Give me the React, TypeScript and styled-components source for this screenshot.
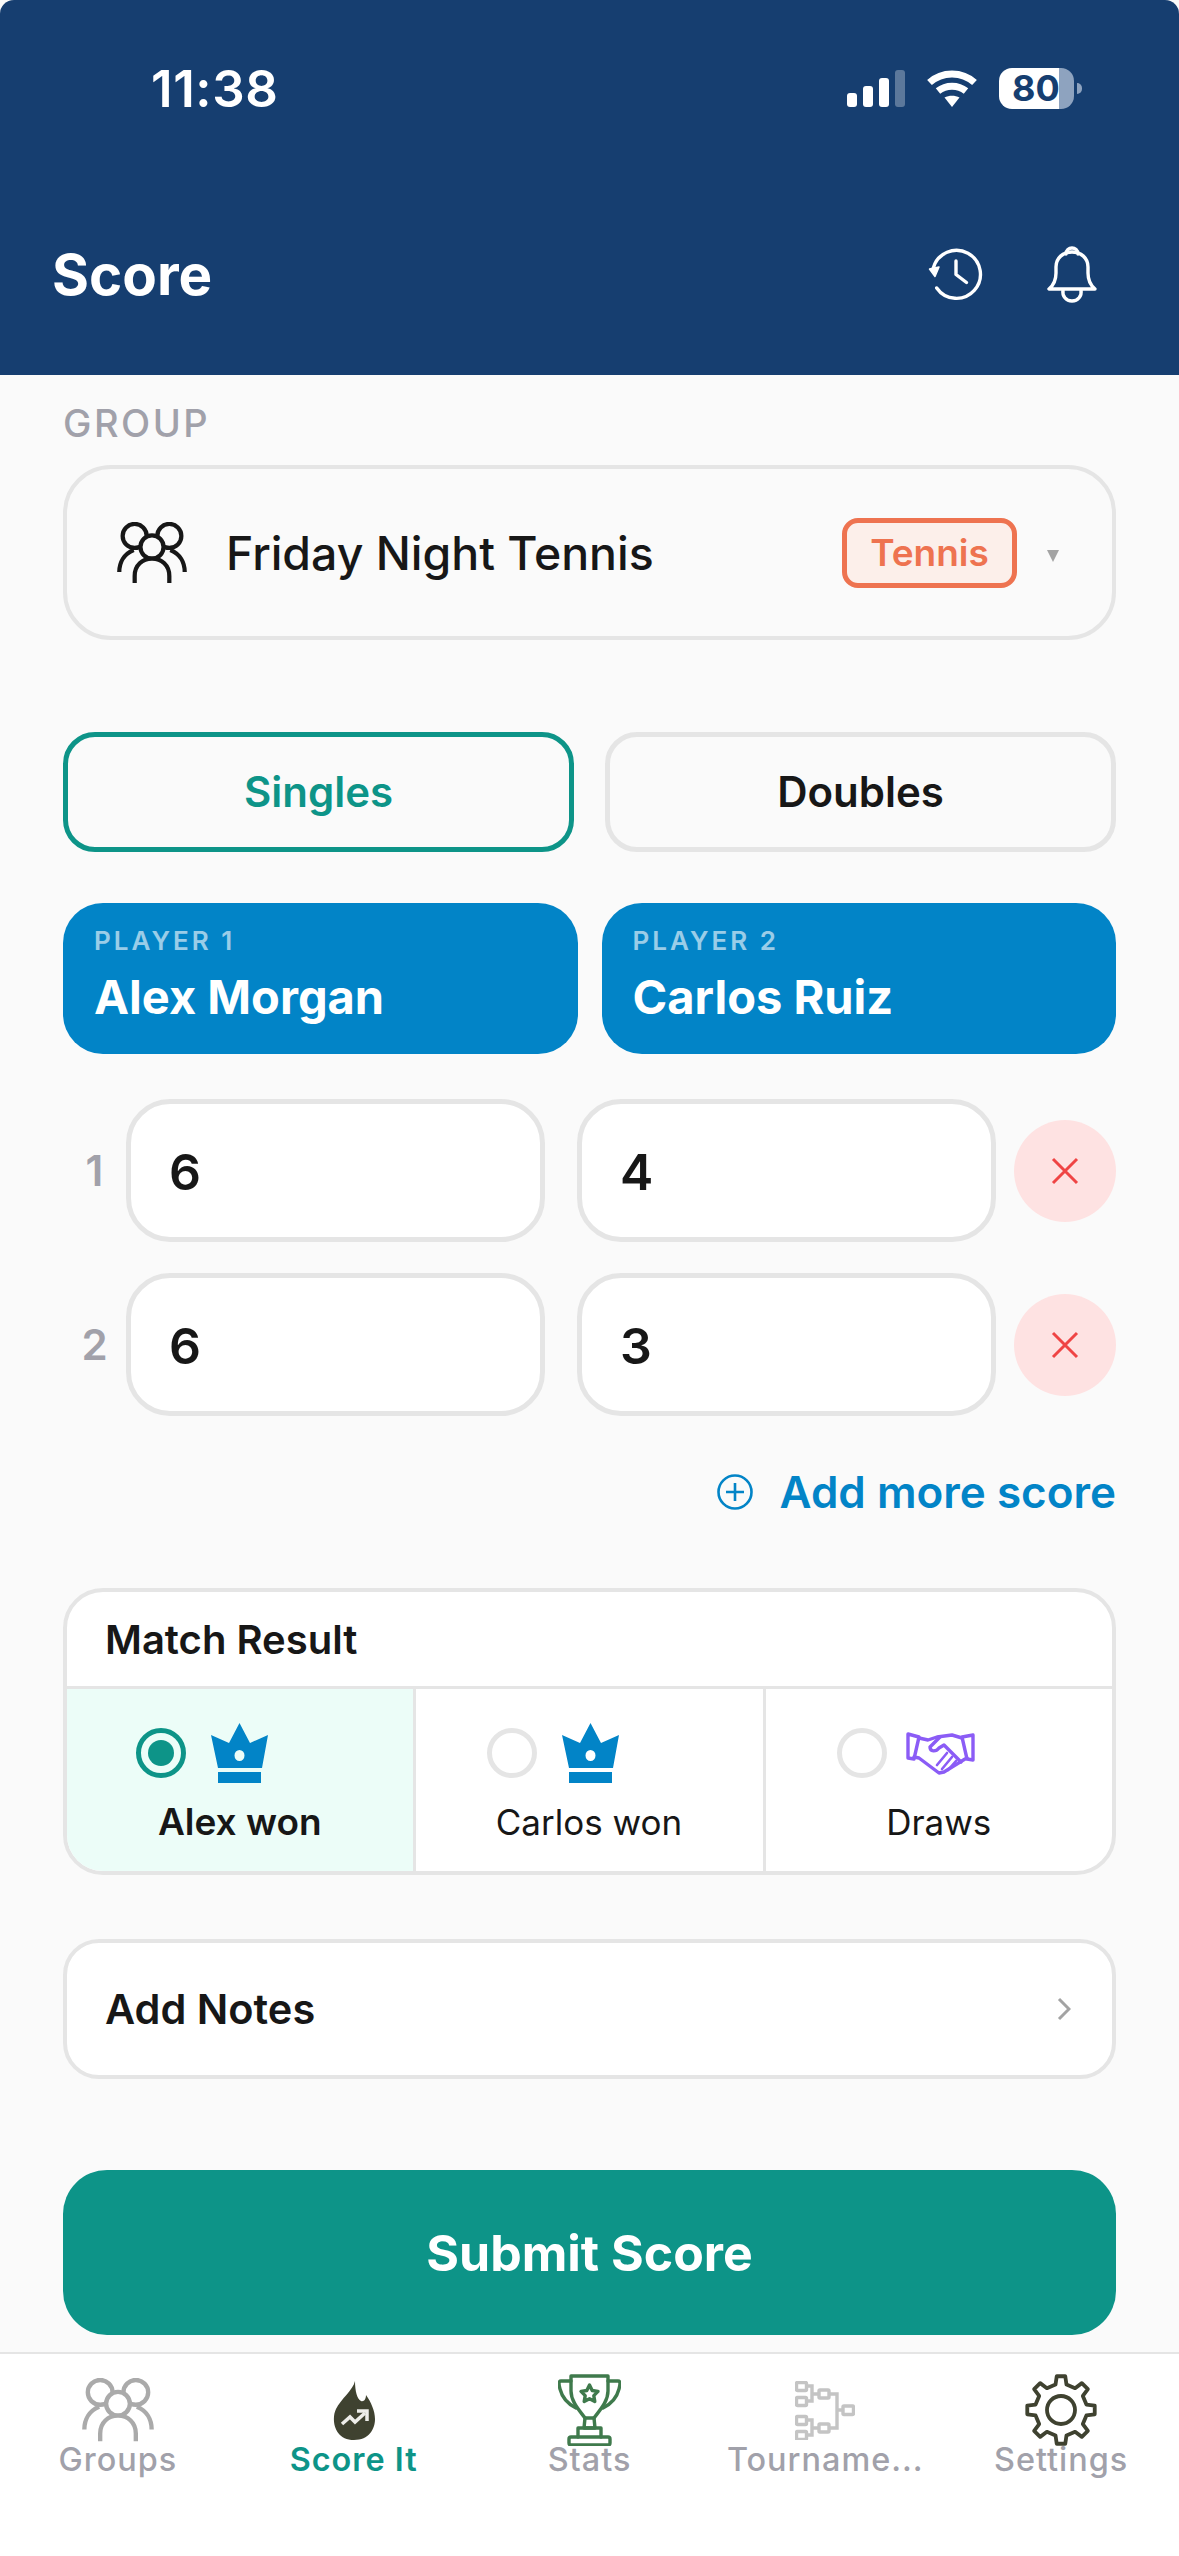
import React from 'react';
import styled, { createGlobalStyle } from 'styled-components';

const GlobalStyle = createGlobalStyle`
    html, body {
        margin: 0;
        padding: 0;
        background: #ffffff;
    }
    body {
        font-family: Inter, "Noto Sans", sans-serif;
        color: #171717;
    }
    * {
        box-sizing: border-box;
    }
`;

const Page = styled.div`
    width: 1179px;
    height: 2556px;
    display: flex;
    flex-direction: column;
    background: #fafafa;
    overflow: hidden;
`;

const Header = styled.header`
    height: 375px;
    flex: none;
    background: #163e70;
    border-radius: 14px 14px 0 0;
    color: #fff;
    padding: 64px 53px 0 52px;
`;

const StatusBar = styled.div`
    height: 48px;
    display: flex;
    align-items: center;
    justify-content: space-between;
    padding: 0 44px 0 99px;
`;

const Time = styled.span`
    font-size: 51px;
    font-weight: 600;
    letter-spacing: 0.6px;
`;

const StatusIcons = styled.div`
    display: flex;
    align-items: center;
    gap: 22px;
`;

const Battery = styled.div`
    width: 75px;
    height: 41px;
    border-radius: 13px;
    background: linear-gradient(90deg, #fff 0 60px, #8ea3bf 60px);
    color: #163e70;
    font-size: 36px;
    font-weight: 700;
    line-height: 41px;
    padding-left: 13px;
`;

const BatteryCap = styled.div`
    width: 5px;
    height: 11px;
    margin-left: -19px;
    background: #8ea3bf;
    border-radius: 0 6px 6px 0;
`;

const TitleRow = styled.div`
    margin-top: 132px;
    height: 60px;
    display: flex;
    align-items: center;
    justify-content: space-between;
    padding-right: 29px;
`;

const Title = styled.h1`
    margin: 0;
    font-size: 56.5px;
    font-weight: 700;
`;

const HeaderActions = styled.div`
    display: flex;
    align-items: center;
    gap: 63px;
`;

const Main = styled.main`
    flex: 1;
    padding: 26px 63px 0;
    display: flex;
    flex-direction: column;
`;

const SectionLabel = styled.div`
    height: 44px;
    line-height: 44px;
    font-size: 38px;
    font-weight: 500;
    letter-spacing: 2.5px;
    color: #a1a1aa;
    margin-bottom: 20px;
`;

const GroupCard = styled.div`
    height: 175px;
    flex: none;
    border: 4px solid #e5e5e5;
    border-radius: 48px;
    display: flex;
    align-items: center;
    padding: 0 53px 0 50px;
`;

const GroupName = styled.span`
    flex: 1;
    margin-left: 39px;
    font-size: 46.4px;
    font-weight: 500;
`;

const Badge = styled.span`
    width: 175px;
    height: 70px;
    display: flex;
    align-items: center;
    justify-content: center;
    border: 5px solid #ee7350;
    border-radius: 16px;
    background: #fcefea;
    color: #ee7350;
    font-size: 37px;
    font-weight: 600;
`;

const Caret = styled.span`
    width: 0;
    height: 0;
    margin-left: 30px;
    margin-top: 6px;
    border-left: 6px solid transparent;
    border-right: 6px solid transparent;
    border-top: 12px solid #a3a3a3;
`;

const ModeRow = styled.div`
    margin-top: 92px;
    display: grid;
    grid-template-columns: 1fr 1fr;
    gap: 31px;
`;

const ModeButton = styled.div<{ $active?: boolean }>`
    height: 120px;
    padding-bottom: 2px;
    display: flex;
    align-items: center;
    justify-content: center;
    border: 5px solid ${p => (p.$active ? '#0d9488' : '#e5e5e5')};
    border-radius: 32px;
    color: ${p => (p.$active ? '#0d9488' : '#171717')};
    font-size: 42px;
    font-weight: 600;
`;

const PlayerRow = styled.div`
    margin-top: 51px;
    display: grid;
    grid-template-columns: 1fr 1fr;
    gap: 24px;
`;

const PlayerCard = styled.div`
    height: 151px;
    border-radius: 40px;
    background: #0284c7;
    color: #fff;
    padding: 22px 31px 0;
`;

const PlayerLabel = styled.div`
    font-size: 26px;
    line-height: 32px;
    font-weight: 600;
    letter-spacing: 3px;
    opacity: 0.6;
`;

const PlayerName = styled.div`
    margin-top: 10px;
    font-size: 47px;
    line-height: 60px;
    font-weight: 700;
`;

const ScoreList = styled.div`
    margin-top: 45px;
    display: flex;
    flex-direction: column;
    gap: 31px;
`;

const ScoreRow = styled.div`
    height: 143px;
    display: flex;
    align-items: center;
`;

const SetNumber = styled.span`
    width: 63px;
    flex: none;
    text-align: center;
    font-size: 42px;
    font-weight: 600;
    color: #a1a1aa;
`;

const ScoreBox = styled.div`
    flex: 1;
    height: 143px;
    display: flex;
    align-items: center;
    padding: 2px 0 0 38px;
    background: #fff;
    border: 5px solid #e5e5e5;
    border-radius: 44px;
    font-size: 50px;
    font-weight: 600;
    & + & {
        margin-left: 32px;
    }
`;

const RemoveButton = styled.div`
    width: 102px;
    height: 102px;
    flex: none;
    margin-left: 18px;
    border-radius: 50%;
    background: #fee2e2;
    display: flex;
    align-items: center;
    justify-content: center;
`;

const AddScore = styled.div`
    margin-top: 46px;
    height: 60px;
    display: flex;
    align-items: center;
    justify-content: flex-end;
    gap: 27px;
    color: #0284c7;
    font-size: 44px;
    font-weight: 600;
`;

const ResultCard = styled.div`
    margin-top: 66px;
    height: 287px;
    flex: none;
    background: #fff;
    border: 4px solid #e5e5e5;
    border-radius: 40px;
    overflow: hidden;
    display: flex;
    flex-direction: column;
`;

const ResultTitle = styled.div`
    height: 97px;
    flex: none;
    display: flex;
    align-items: center;
    padding-left: 38px;
    border-bottom: 3px solid #e5e5e5;
    font-size: 40px;
    font-weight: 600;
`;

const ResultGrid = styled.div`
    flex: 1;
    display: grid;
    grid-template-columns: 348.5px 350px 1fr;
`;

const ResultIcons = styled.div`
    height: 60px;
    display: flex;
    align-items: center;
    gap: 25px;
    padding-left: 71.5px;
`;

const ResultCell = styled.div<{ $active?: boolean }>`
    background: ${p => (p.$active ? '#ecfdf8' : 'transparent')};
    padding-top: 34px;
    display: flex;
    flex-direction: column;
    border-right: 3px solid #e5e5e5;
    &:first-child ${ResultIcons} {
        padding-left: 69px;
    }
    &:last-child {
        border-right: none;
    }
`;

const Radio = styled.span<{ $active?: boolean }>`
    width: 50px;
    height: 50px;
    border-radius: 50%;
    border: 5px solid ${p => (p.$active ? '#0d9488' : '#e5e5e5')};
    display: flex;
    align-items: center;
    justify-content: center;
    &::after {
        content: '';
        width: 26px;
        height: 26px;
        border-radius: 50%;
        background: ${p => (p.$active ? '#0d9488' : 'transparent')};
    }
`;

const ResultLabel = styled.div<{ $active?: boolean }>`
    margin-top: 17px;
    text-align: center;
    font-size: ${p => (p.$active ? 37 : 35)}px;
    line-height: 44px;
    font-weight: ${p => (p.$active ? 600 : 400)};
`;

const NotesRow = styled.div`
    margin-top: 64px;
    height: 140px;
    flex: none;
    background: #fff;
    border: 4px solid #e5e5e5;
    border-radius: 36px;
    display: flex;
    align-items: center;
    justify-content: space-between;
    padding: 0 41px 0 38px;
    font-size: 41.5px;
    font-weight: 600;
`;

const SubmitButton = styled.div`
    margin-top: 91px;
    height: 165px;
    flex: none;
    border-radius: 44px;
    background: #0d9488;
    color: #fff;
    display: flex;
    align-items: center;
    justify-content: center;
    font-size: 50px;
    font-weight: 700;
`;

const TabBar = styled.nav`
    height: 204px;
    flex: none;
    background: #fff;
    border-top: 2px solid #e5e5e5;
    display: grid;
    grid-template-columns: repeat(5, 1fr);
    padding-top: 20px;
`;

const Tab = styled.div`
    display: flex;
    flex-direction: column;
    align-items: center;
`;

const TabIcon = styled.div`
    height: 72px;
    display: flex;
    align-items: center;
    justify-content: center;
`;

const TabLabel = styled.span<{ $active?: boolean }>`
    margin-top: -3px;
    font-size: 32.4px;
    line-height: 34px;
    font-weight: ${p => (p.$active ? 600 : 500)};
    letter-spacing: 1px;
    color: ${p => (p.$active ? '#0d9488' : '#a1a1aa')};
    white-space: nowrap;
`;

const Signal = () => (
    <svg width="58" height="37" viewBox="0 0 58 37" fill="#fff">
        <rect x="0" y="23" width="10" height="14" rx="3" />
        <rect x="16" y="16" width="10" height="21" rx="3" />
        <rect x="32" y="8" width="10" height="29" rx="3" />
        <rect x="48" y="0" width="10" height="37" rx="3" opacity="0.3" />
    </svg>
);

const Wifi = () => (
    <svg width="50" height="37" viewBox="0 0 50 37" fill="none" stroke="#fff" strokeWidth="7">
        <path d="M2.5 12.5 C15 1 35 1 47.5 12.5" />
        <path d="M11 21 C19 14.5 31 14.5 39 21" />
        <path d="M17.5 27.5 C22 25 28 25 32.5 27.5 L25 37 Z" fill="#fff" stroke="none" />
    </svg>
);

const HistoryIcon = () => (
    <svg width="56" height="56" viewBox="0 0 56 56" fill="none" stroke="#fff" strokeWidth="3.4" strokeLinecap="round" strokeLinejoin="round">
        <path d="M5.3 22 A24 24 0 1 1 8.7 42" />
        <path d="M28 15 V28.5 L38.5 36.5" />
        <path d="M1.5 23 L11 21 L7 30.5 Z" fill="#fff" strokeWidth="1.5" />
    </svg>
);

const BellIcon = () => (
    <svg width="50" height="57" viewBox="0 0 50 57" fill="none" stroke="#fff" strokeWidth="3.4" strokeLinecap="round" strokeLinejoin="round">
        <path d="M2 43 H48 C42 38 41 33 41 27 V21 C41 12 34 6 25 6 C16 6 9 12 9 21 V27 C9 33 8 38 2 43 Z" />
        <path d="M19 8 C19 4 22 2 25 2 C28 2 31 4 31 8" />
        <path d="M16 44 C15 50 19 55 25 55 C31 55 35 50 34 44" />
    </svg>
);

const PeopleIcon = ({ color, bg, size }: { color: string; bg: string; size: number }) => (
    <svg width={size} height={size * 0.88} viewBox="0 0 72 64" fill="none" stroke={color} strokeWidth="4.4" strokeLinecap="butt">
        <circle cx="18" cy="14.5" r="12.5" />
        <circle cx="54" cy="14.5" r="12.5" />
        <circle cx="36" cy="26" r="12" fill={bg} />
        <path d="M18 64 V56 C18 45 26 38 36 38 C46 38 54 45 54 56 V64" fill={bg} />
        <path d="M2 52 C2 42 7 33 17 29" />
        <path d="M70 52 C70 42 65 33 55 29" />
    </svg>
);

const CrownIcon = () => (
    <svg width="57" height="60" viewBox="0 0 57 60" fill="#0284c7">
        <path
            fillRule="evenodd"
            d="M28.5 0 L39 20 L57 12 L51 45 H7 L0 12 L18 20 Z M28.5 27 A5 5.5 0 1 0 28.5 38 A5 5.5 0 1 0 28.5 27 Z"
        />
        <rect x="7" y="49" width="43" height="11" />
    </svg>
);

const HandshakeIcon = styled(({ className }: { className?: string }) => (
    <svg className={className} width="69" height="43" viewBox="0 0 69 43" fill="none" stroke="#8b5cf6" strokeWidth="3.4" strokeLinejoin="round" strokeLinecap="round">
        <path d="M2 2 L13 5 L8 27 L2 26 Z" />
        <path d="M67 3 V28 L61 27 L56 5 Z" />
        <path d="M13 6 L22 8 L31 5 L46 3 L56 6" />
        <path d="M8 25 L13 26 L33 41 L38 40 L59 27 L61 26" />
        <path d="M34 5 L24 15 C24 20 30 20 33 16 L38 13 L55 30" />
        <path d="M46 25 L36 37 M41 21 L31 33 M50 29 L42 38" strokeWidth="2.6" />
    </svg>
))`
    margin-left: -6px;
`;

const FlameIcon = () => (
    <svg width="42" height="59" viewBox="0 0 42 59">
        <path
            fill="#3f4230"
            d="M22 0 C20 9 8 18 3 28 C-2 38 1 59 21 59 C36 59 42 48 42 38 C42 30 38 21 33 14 C33 18 31 21 28 20 C24 18 22 10 22 0 Z"
        />
        <path d="M9 43 L17 36 L22 41 L32 32" fill="none" stroke="#eeeeea" strokeWidth="3.5" />
        <path d="M24 30 H34 V40" fill="none" stroke="#eeeeea" strokeWidth="3.5" />
    </svg>
);

const TrophyIcon = () => (
    <svg width="63" height="72" viewBox="0 0 63 72" fill="none" stroke="#3f7a4c" strokeWidth="3.4" strokeLinejoin="round" strokeLinecap="round">
        <path d="M13 2 H50 V17 C50 28 41 37 36 44 H27 C22 37 13 28 13 17 Z" />
        <path d="M13 7 H3 C0 7 1 11 2 15 C4 23 10 30 18 34" />
        <path d="M50 7 H60 C63 7 62 11 61 15 C59 23 53 30 45 34" />
        <path d="M31.5 11 L34.2 16.5 L40 17.4 L35.8 21.6 L36.8 27.5 L31.5 24.7 L26.2 27.5 L27.2 21.6 L23 17.4 L28.8 16.5 Z" />
        <path d="M27 44 L26 54 H37 L36 44" />
        <path d="M20 63 V54 H43 V63" />
        <rect x="11" y="63" width="41" height="8" rx="2" />
    </svg>
);

const BracketIcon = () => (
    <svg width="60" height="59" viewBox="0 0 60 59" fill="none" stroke="#c4c4c4" strokeWidth="3.4">
        <rect x="1.5" y="1.5" width="10" height="8" rx="1" />
        <rect x="1.5" y="16.5" width="10" height="8" rx="1" />
        <rect x="1.5" y="35.5" width="10" height="8" rx="1" />
        <rect x="1.5" y="50.5" width="10" height="8" rx="1" />
        <rect x="24" y="9" width="10" height="8" rx="1" />
        <rect x="24" y="43" width="10" height="8" rx="1" />
        <rect x="48" y="25" width="10.5" height="8.5" rx="1" />
        <path d="M11.5 5 H17 V20 H11.5 M17 13 H24 M11.5 39 H17 V54 H11.5 M17 47 H24 M34 13 H42 V47 H34 M42 29 H48" />
    </svg>
);

const gearPath = () => {
    const points: string[] = [];
    const teeth = 8;
    const outer = 34;
    const root = 26;
    for (let i = 0; i < teeth; i++) {
        const a = (i / teeth) * Math.PI * 2 - Math.PI / 2;
        const step = (Math.PI * 2) / teeth;
        const at = (r: number, t: number) =>
            `${(36 + r * Math.cos(t)).toFixed(2)} ${(36 + r * Math.sin(t)).toFixed(2)}`;
        points.push(at(root, a - step * 0.27), at(outer, a - step * 0.16), at(outer, a + step * 0.16), at(root, a + step * 0.27));
    }
    return `M${points.join(' L')} Z`;
};

const GearIcon = () => (
    <svg width="72" height="72" viewBox="0 0 72 72" fill="none" stroke="#3f4230" strokeWidth="3.8" strokeLinejoin="round">
        <path d={gearPath()} />
        <circle cx="36" cy="36" r="14" />
    </svg>
);

const scores = [
    { set: 1, a: 6, b: 4 },
    { set: 2, a: 6, b: 3 },
];

const tabs = [
    { label: 'Groups', icon: <PeopleIcon color="#aaaaaa" bg="#ffffff" size={72} /> },
    { label: 'Score It', icon: <FlameIcon />, active: true },
    { label: 'Stats', icon: <TrophyIcon /> },
    { label: 'Tourname...', icon: <BracketIcon /> },
    { label: 'Settings', icon: <GearIcon /> },
];

const App: React.FC = () => (
    <Page>
        <GlobalStyle />
        <Header>
            <StatusBar>
                <Time>11:38</Time>
                <StatusIcons>
                    <Signal />
                    <Wifi />
                    <Battery>80</Battery>
                    <BatteryCap />
                </StatusIcons>
            </StatusBar>
            <TitleRow>
                <Title>Score</Title>
                <HeaderActions>
                    <HistoryIcon />
                    <BellIcon />
                </HeaderActions>
            </TitleRow>
        </Header>
        <Main>
            <SectionLabel>GROUP</SectionLabel>
            <GroupCard>
                <PeopleIcon color="#171717" bg="#fafafa" size={70} />
                <GroupName>Friday Night Tennis</GroupName>
                <Badge>Tennis</Badge>
                <Caret />
            </GroupCard>
            <ModeRow>
                <ModeButton $active>Singles</ModeButton>
                <ModeButton>Doubles</ModeButton>
            </ModeRow>
            <PlayerRow>
                <PlayerCard>
                    <PlayerLabel>PLAYER 1</PlayerLabel>
                    <PlayerName>Alex Morgan</PlayerName>
                </PlayerCard>
                <PlayerCard>
                    <PlayerLabel>PLAYER 2</PlayerLabel>
                    <PlayerName>Carlos Ruiz</PlayerName>
                </PlayerCard>
            </PlayerRow>
            <ScoreList>
                {scores.map(row => (
                    <ScoreRow key={row.set}>
                        <SetNumber>{row.set}</SetNumber>
                        <ScoreBox>{row.a}</ScoreBox>
                        <ScoreBox>{row.b}</ScoreBox>
                        <RemoveButton>
                            <svg width="28" height="28" viewBox="0 0 28 28" stroke="#ef4444" strokeWidth="3">
                                <path d="M2 2 L26 26 M26 2 L2 26" />
                            </svg>
                        </RemoveButton>
                    </ScoreRow>
                ))}
            </ScoreList>
            <AddScore>
                <svg width="36" height="36" viewBox="0 0 36 36" fill="none" stroke="#0284c7" strokeWidth="2.6">
                    <circle cx="18" cy="18" r="16.5" />
                    <path d="M18 9 V27 M9 18 H27" />
                </svg>
                Add more score
            </AddScore>
            <ResultCard>
                <ResultTitle>Match Result</ResultTitle>
                <ResultGrid>
                    <ResultCell $active>
                        <ResultIcons>
                            <Radio $active />
                            <CrownIcon />
                        </ResultIcons>
                        <ResultLabel $active>Alex won</ResultLabel>
                    </ResultCell>
                    <ResultCell>
                        <ResultIcons>
                            <Radio />
                            <CrownIcon />
                        </ResultIcons>
                        <ResultLabel>Carlos won</ResultLabel>
                    </ResultCell>
                    <ResultCell>
                        <ResultIcons>
                            <Radio />
                            <HandshakeIcon />
                        </ResultIcons>
                        <ResultLabel>Draws</ResultLabel>
                    </ResultCell>
                </ResultGrid>
            </ResultCard>
            <NotesRow>
                Add Notes
                <svg width="14" height="24" viewBox="0 0 14 24" fill="none" stroke="#a3a3a3" strokeWidth="3">
                    <path d="M2 2 L12 12 L2 22" />
                </svg>
            </NotesRow>
            <SubmitButton>Submit Score</SubmitButton>
        </Main>
        <TabBar>
            {tabs.map(tab => (
                <Tab key={tab.label}>
                    <TabIcon>{tab.icon}</TabIcon>
                    <TabLabel $active={tab.active}>{tab.label}</TabLabel>
                </Tab>
            ))}
        </TabBar>
    </Page>
);

export default App;
